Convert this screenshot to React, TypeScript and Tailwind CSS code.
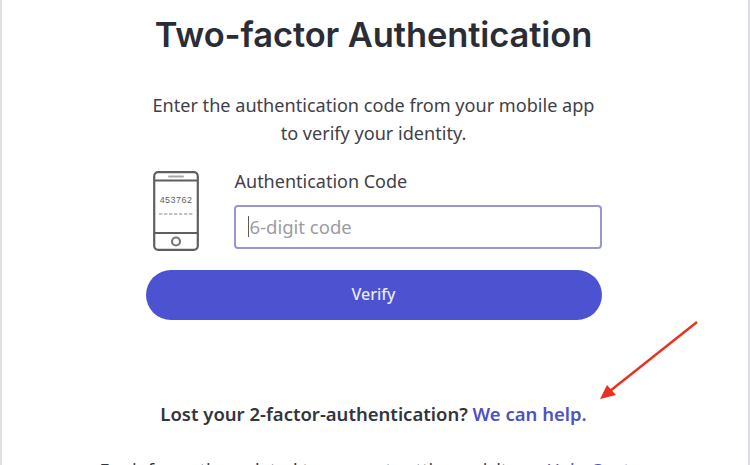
import { useEffect, useRef } from "react";

function PhoneIcon() {
  return (
    <svg width="46" height="81" viewBox="0 0 46 81" fill="none" className="shrink-0">
      <rect x="1.2" y="1.2" width="43.6" height="77.6" rx="4" stroke="#5f5f62" strokeWidth="2.2" />
      <path d="M1.5 9.5H44.5M1.5 62H44.5" stroke="#5f5f62" strokeWidth="2" />
      <path d="M16 5.5H30" stroke="#a9a9ac" strokeWidth="2" strokeLinecap="round" />
      <circle cx="23" cy="70.5" r="4" stroke="#77777a" strokeWidth="2.2" />
      <text x="23" y="32" textAnchor="middle" fontSize="9" letterSpacing="0.45" fill="#5f5f62" fontFamily="'Liberation Sans', sans-serif">
        453762
      </text>
      <path d="M6 43H40" stroke="#85858a" strokeWidth="1.2" strokeDasharray="3.4 1.6" />
    </svg>
  );
}

export default function App() {
  const inputRef = useRef<HTMLInputElement>(null);

  useEffect(() => {
    inputRef.current?.focus();
  }, []);

  return (
    <div className="relative h-[465px] w-[750px] overflow-hidden bg-white font-['Noto_Sans',sans-serif]">
      <div className="flex h-full flex-col items-center border-r-2 border-l-2 border-[#dfdfe3] pr-[3px] pt-[15px]">
        <h1 className="text-[34.5px] leading-[40px] font-semibold tracking-[-0.1px] whitespace-nowrap text-[#2a2d36] font-['Inter',sans-serif]">
          Two-factor Authentication
        </h1>

        <p className="mt-[36px] text-center text-[18.1px] leading-[28px] whitespace-nowrap text-[#3f4148]">
          Enter the authentication code from your mobile app
          <br />
          to verify your identity.
        </p>

        <div className="mt-[22px] w-[456px]">
          <div className="flex items-start gap-[36px]">
            <div className="mt-[2px] ml-[7px]">
              <PhoneIcon />
            </div>
            <label className="flex flex-col">
              <span className="text-[18px] leading-[24px] text-[#3f4148]">Authentication Code</span>
              <span className="relative mt-[12px] -ml-[1px] block">
                <input
                  ref={inputRef}
                  placeholder="6-digit code"
                  className="block h-[44px] w-[368px] rounded-[4px] border-2 border-[#9896d2] bg-white pr-[13px] pl-[14px] pb-[2px] text-[18.5px] caret-transparent outline-none placeholder:text-[#9c9ca1]"
                />
                <span className="absolute top-[11px] left-[14px] h-[21px] w-[1.5px] bg-[#5a5a60]" />
              </span>
            </label>
          </div>

          <button
            type="button"
            className="mt-[18px] block h-[50px] w-[456px] rounded-full bg-[#4d52d1] pb-[2px] text-[16px] font-medium text-[#e9e9f8]"
          >
            Verify
          </button>
        </div>

        <p className="mt-[83px] text-[18.5px] leading-[22px] font-semibold whitespace-nowrap text-[#33353d]">
          Lost your 2-factor-authentication? <a className="text-[#4d52c4]">We can help.</a>
        </p>

        <p className="mt-[34px] text-[18.1px] leading-[22px] whitespace-nowrap text-[#33353d]">
          For information related to account settings, visit our <a className="text-[#4d52c4]">Help Center</a>
        </p>
      </div>

      <svg width="750" height="465" viewBox="0 0 750 465" className="pointer-events-none absolute top-0 left-0">
        <path d="M697 322L610 391" stroke="#e8321f" strokeWidth="2.4" />
        <path d="M600 399L607 385L616 395Z" fill="#e8321f" />
      </svg>
    </div>
  );
}
